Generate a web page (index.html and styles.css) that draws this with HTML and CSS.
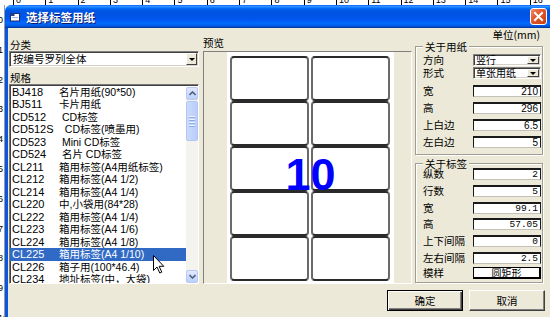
FILE: index.html
```html
<!DOCTYPE html>
<html>
<head>
<meta charset="utf-8">
<link rel="stylesheet" href="styles.css">
</head>
<body>
<div class="desk">
  <div class="ruler-top">
    <span>0</span><span>1</span><span>2</span><span>3</span><span>4</span><span>5</span><span>6</span><span>7</span><span>8</span><span>9</span><span>10</span><span>11</span><span>12</span><span>13</span><span>14</span><span>15</span><span>16</span><span>17</span>
  </div>
  <div class="ruler-left">
    <span>0</span><span>1</span><span>2</span><span>3</span><span>4</span><span>5</span><span>6</span><span>7</span><span>8</span><span>9</span><span>10</span>
  </div>
  <div class="win">
    <div class="titlebar">
      <svg class="ticon" width="11" height="10" viewBox="0 0 11 10">
        <rect x="0.5" y="1.5" width="9" height="7.5" fill="#fff" stroke="#1b2f6e"/>
        <rect x="0.5" y="1.5" width="4" height="2.5" fill="#2a3f8a"/>
        <rect x="2" y="5" width="6" height="1" fill="#9db3e6"/>
      </svg>
      <span class="ttext">选择标签用纸</span>
      <div class="close">
        <svg width="11" height="11" viewBox="0 0 11 11"><path d="M2 2 L9 9 M9 2 L2 9" stroke="#fff" stroke-width="2" stroke-linecap="square"/></svg>
      </div>
    </div>
    <div class="frame">
      <div class="main">
        <div class="col-left">
          <div class="lbl lbl-a">分类</div>
          <div class="combo combo-wide"><span class="val">按编号罗列全体</span><span class="arrow"></span></div>
          <div class="lbl lbl-b">规格</div>
          <div class="list">
            <div class="items">
              <div class="item"><span class="code">BJ418</span><span class="desc">名片用纸(90*50)</span></div>
              <div class="item"><span class="code">BJ511</span><span class="desc">卡片用纸</span></div>
              <div class="item"><span class="code">CD512</span><span class="desc"> CD标签</span></div>
              <div class="item"><span class="code">CD512S</span><span class="desc">  CD标签(喷墨用)</span></div>
              <div class="item"><span class="code">CD523</span><span class="desc"> Mini CD标签</span></div>
              <div class="item"><span class="code">CD524</span><span class="desc"> 名片 CD标签</span></div>
              <div class="item"><span class="code">CL211</span><span class="desc">箱用标签(A4用纸标签)</span></div>
              <div class="item"><span class="code">CL212</span><span class="desc">箱用标签(A4 1/2)</span></div>
              <div class="item"><span class="code">CL214</span><span class="desc">箱用标签(A4 1/4)</span></div>
              <div class="item"><span class="code">CL220</span><span class="desc">中,小袋用(84*28)</span></div>
              <div class="item"><span class="code">CL222</span><span class="desc">箱用标签(A4 1/4)</span></div>
              <div class="item"><span class="code">CL223</span><span class="desc">箱用标签(A4 1/6)</span></div>
              <div class="item"><span class="code">CL224</span><span class="desc">箱用标签(A4 1/8)</span></div>
              <div class="item sel"><span class="code">CL225</span><span class="desc">箱用标签(A4 1/10)</span></div>
              <div class="item"><span class="code">CL226</span><span class="desc">箱子用(100*46.4)</span></div>
              <div class="item"><span class="code">CL234</span><span class="desc">地址标签(中，大袋)</span></div>
            </div>
            <div class="vscroll">
              <div class="sb-btn"><svg width="7" height="5" viewBox="0 0 7 5"><path d="M0.5 4 L3.5 1 L6.5 4" fill="none" stroke="#4d6185" stroke-width="1.6"/></svg></div>
              <div class="sb-track"><div class="sb-thumb"><i></i><i></i><i></i><i></i></div></div>
              <div class="sb-btn"><svg width="7" height="5" viewBox="0 0 7 5"><path d="M0.5 1 L3.5 4 L6.5 1" fill="none" stroke="#4d6185" stroke-width="1.6"/></svg></div>
            </div>
          </div>
        </div>
        <div class="col-mid">
          <div class="lbl lbl-c">预览</div>
          <div class="preview">
            <div class="paper">
              <div class="labels">
                <div class="cell"></div><div class="cell"></div>
                <div class="cell"></div><div class="cell"></div>
                <div class="cell"></div><div class="cell"></div>
                <div class="cell"></div><div class="cell"></div>
                <div class="cell"></div><div class="cell"></div>
              </div>
              <div class="count">10</div>
            </div>
          </div>
        </div>
        <div class="col-right">
          <div class="unit">单位(mm)</div>
          <div class="group g1">
            <span class="gtitle">关于用纸</span>
            <div class="frow"><span class="flbl">方向</span><div class="combo combo-sm"><span class="val">竖行</span><span class="arrow"></span></div></div>
            <div class="frow m1"><span class="flbl">形式</span><div class="combo combo-sm"><span class="val">单张用纸</span><span class="arrow"></span></div></div>
            <div class="frow m6"><span class="flbl">宽</span><div class="field">210</div></div>
            <div class="frow m5"><span class="flbl">高</span><div class="field">296</div></div>
            <div class="frow m5"><span class="flbl">上白边</span><div class="field">6.5</div></div>
            <div class="frow m5"><span class="flbl">左白边</span><div class="field">5</div></div>
          </div>
          <div class="group g2">
            <span class="gtitle">关于标签</span>
            <div class="frow"><span class="flbl">纵数</span><div class="field mono">2</div></div>
            <div class="frow m5"><span class="flbl">行数</span><div class="field mono">5</div></div>
            <div class="frow m5"><span class="flbl">宽</span><div class="field mono">99.1</div></div>
            <div class="frow m4"><span class="flbl">高</span><div class="field mono">57.05</div></div>
            <div class="frow m5"><span class="flbl">上下间隔</span><div class="field mono">0</div></div>
            <div class="frow m5"><span class="flbl">左右间隔</span><div class="field mono">2.5</div></div>
            <div class="frow m3"><span class="flbl">模样</span><div class="shape">圆矩形</div></div>
          </div>
        </div>
      </div>
      <div class="btnrow">
        <div class="btn btn-default">确定</div>
        <div class="btn">取消</div>
      </div>
    </div>
  </div>
  <svg class="cursor" width="12" height="19" viewBox="0 0 12 19">
    <path d="M0.5 0.5 L0.5 15.5 L4 12 L6.8 18 L8.8 17.1 L6.1 11.3 L10.8 11.3 Z" fill="#fff" stroke="#000" stroke-width="1" stroke-linejoin="miter"/>
  </svg>
</div>
</body>
</html>
```
FILE: styles.css
```css
* { box-sizing: border-box; }
body {
  margin: 0;
  width: 550px;
  height: 317px;
  overflow: hidden;
  background: #fff;
  font-family: "Liberation Sans", "Noto Sans CJK SC", sans-serif;
  color: #000;
}
.desk {
  position: relative;
  display: grid;
  grid-template-columns: 5px 545px;
  grid-template-rows: 5px 312px;
  width: 550px;
  height: 317px;
  overflow: hidden;
}
.ruler-top {
  grid-column: 1 / 3;
  grid-row: 1;
  display: flex;
  padding-left: 13px;
  overflow: hidden;
}
.ruler-top span {
  flex: none;
  width: 32.3px;
  height: 5px;
  border-left: 1px solid #000;
  display: flex;
  align-items: flex-end;
  padding-left: 2px;
  font-size: 9px;
  line-height: 9px;
  overflow: hidden;
}
.ruler-left {
  grid-column: 1;
  grid-row: 2;
  display: flex;
  flex-direction: column;
  padding-top: 10px;
  overflow: hidden;
  border-right: 1px solid #9a9a9a;
}
.ruler-left span {
  flex: none;
  height: 29.8px;
  font-size: 9px;
  line-height: 10px;
  text-indent: -2px;
  white-space: nowrap;
  overflow: hidden;
}
.win {
  grid-column: 2;
  grid-row: 2;
  display: flex;
  flex-direction: column;
  overflow: hidden;
}
.titlebar {
  flex: none;
  height: 23px;
  display: flex;
  align-items: center;
  padding-left: 5px;
  border-radius: 6px 0 0 0;
  background: linear-gradient(to bottom, #0058ee 0%, #3593ff 5%, #288eff 8%, #127dff 11%, #036ffc 14%, #0262ee 18%, #0057e5 24%, #0054e3 30%, #0055eb 58%, #005bf5 68%, #026afe 78%, #0062ef 87%, #0052d6 93%, #0040ab 97%, #003092 100%);
}
.ticon { flex: none; }
.ttext {
  margin-left: 5px;
  color: #fff;
  font-family: "Noto Sans CJK SC", sans-serif;
  font-weight: bold;
  font-size: 11.5px;
  line-height: 14px;
  text-shadow: 1px 1px 0 #0a1e6e;
}
.close {
  margin-left: auto;
  margin-right: 3px;
  width: 17px;
  height: 17px;
  border: 1px solid #fff;
  border-radius: 3px;
  background: linear-gradient(135deg, #f08a62 0%, #e2572a 45%, #c9400f 100%);
  display: flex;
  align-items: center;
  justify-content: center;
}
.frame {
  flex: 1;
  border-left: 3px solid #0a55e4;
  background: #ece9d8;
}
.main {
  display: flex;
  height: 256px;
}
.col-left {
  margin-left: 1px;
  width: 190px;
  display: flex;
  flex-direction: column;
}
.col-mid {
  margin-left: 4px;
  width: 209px;
  display: flex;
  flex-direction: column;
}
.col-right {
  margin-left: 3px;
  width: 128px;
  display: flex;
  flex-direction: column;
}
.lbl {
  display: flex;
  align-items: flex-end;
  font-family: "Noto Sans CJK SC", sans-serif;
  font-size: 10.5px;
  line-height: 13px;
}
.lbl-a { height: 23px; padding-left: 1px; }
.lbl-b { height: 17px; padding-left: 1px; padding-bottom: 0; }
.lbl-c { height: 23px; padding-bottom: 2px; }

.combo {
  display: flex;
  background: #fff;
  border: 1px solid;
  border-color: #808080 #fff #fff #808080;
  box-shadow: inset 1px 1px 0 #404040, inset -1px -1px 0 #d4d0c8;
}
.combo .val {
  flex: 1;
  padding-left: 3px;
  font-family: "Noto Sans CJK SC", sans-serif;
  font-size: 10.5px;
  white-space: nowrap;
  overflow: hidden;
  display: flex;
  align-items: center;
}
.combo .arrow {
  flex: none;
  width: 11px;
  margin: 1px 1px 1px 0;
  background: #ece9d8;
  border: 1px solid;
  border-color: #fff #404040 #404040 #fff;
  display: flex;
  align-items: center;
  justify-content: center;
}
.combo .arrow::after {
  content: "";
  border-left: 3px solid transparent;
  border-right: 3px solid transparent;
  border-top: 3px solid #000;
}
.combo-wide { height: 16px; width: 190px; }
.combo-wide .val { line-height: 14px; }
.combo-sm { height: 12px; width: 68px; }
.combo-sm .val { padding-left: 2px; line-height: 10px; font-size: 10px; }
.combo-sm .arrow { width: 12px; }

.list {
  height: 200px;
  display: flex;
  background: #fff;
  border: 1px solid;
  border-color: #7a7a7a #fff #fff #7a7a7a;
  box-shadow: inset 1px 1px 0 #404040;
}
.items {
  flex: 1;
  padding-top: 0.5px;
  overflow: hidden;
}
.item {
  height: 12.5px;
  line-height: 12.5px;
  padding-left: 2px;
  font-size: 11px;
  white-space: pre;
  overflow: hidden;
}
.item .code { display: inline-block; width: 47px; }
.item .desc { font-size: 10.5px; }
.item.sel { background: #316ac5; color: #fff; }
.vscroll {
  flex: none;
  width: 12px;
  margin: 2px 0 0 0;
  display: flex;
  flex-direction: column;
  background: #f4f3ee;
}
.sb-btn {
  flex: none;
  height: 13px;
  border: 1px solid #b7caf5;
  border-radius: 2px;
  background: linear-gradient(#e0e9fe, #bdd0fb);
  display: flex;
  align-items: center;
  justify-content: center;
}
.sb-track {
  flex: 1;
  padding-top: 1px;
}
.sb-thumb {
  height: 40px;
  border: 1px solid #b2c6f4;
  border-radius: 2px;
  background: linear-gradient(90deg, #cbdafd, #b9cdfa);
  display: flex;
  flex-direction: column;
  align-items: center;
  justify-content: center;
  gap: 1px;
}
.sb-thumb i {
  display: block;
  width: 6px;
  height: 1px;
  background: #eef3ff;
  box-shadow: 0 1px 0 #8faaf0;
  margin-bottom: 1px;
}

.preview {
  height: 233px;
  width: 209px;
  border: 1px solid;
  border-color: #808080 #fff #fff #808080;
  padding-left: 23px;
}
.paper {
  position: relative;
  width: 167px;
  height: 231px;
  background: #fff;
  padding: 4px 0 0 3px;
}
.labels {
  display: grid;
  grid-template-columns: 79px 79px;
  grid-auto-rows: 45px;
  column-gap: 2px;
}
.cell {
  border: 2px solid #6a6a6a;
  border-top-color: #2a2a2a;
  border-bottom-color: #2a2a2a;
  border-radius: 4px;
}
.count {
  position: absolute;
  top: 100px;
  left: 0;
  right: 0;
  text-align: center;
  font-family: "Liberation Sans", sans-serif;
  font-weight: bold;
  font-size: 45px;
  line-height: 45px;
  color: #0000ff;
}

.unit {
  height: 18px;
  text-align: right;
  padding-right: 3px;
  font-family: "Noto Sans CJK SC", sans-serif;
  font-size: 10.5px;
  line-height: 13px;
}
.group {
  position: relative;
  border: 1px solid #a09e90;
  box-shadow: inset 1px 1px 0 #fff, 1px 1px 0 #fff;
  padding-left: 7px;
}
.g1 { height: 109px; padding-top: 7px; }
.g2 { height: 120px; margin-top: 8px; padding-top: 4px; }
.gtitle {
  position: absolute;
  top: -6px;
  left: 7px;
  padding: 0 2px;
  background: #ece9d8;
  font-family: "Noto Sans CJK SC", sans-serif;
  font-size: 10.5px;
  line-height: 11px;
}
.frow {
  display: flex;
  align-items: center;
  height: 12px;
}
.m1 { margin-top: 1px; }
.m3 { margin-top: 3px; }
.m4 { margin-top: 4px; }
.m5 { margin-top: 5px; }
.m6 { margin-top: 6px; }
.flbl {
  width: 50px;
  flex: none;
  font-family: "Noto Sans CJK SC", sans-serif;
  font-size: 10.5px;
  line-height: 12px;
  white-space: nowrap;
}
.field {
  width: 68px;
  height: 12px;
  background: #fff;
  border: 1px solid #1a1a1a;
  border-top-width: 2px;
  border-bottom-color: #c4c2b8;
  text-align: right;
  padding-right: 2px;
  font-size: 10px;
  line-height: 9px;
}
.field.mono {
  font-family: "Liberation Mono", monospace;
  font-size: 9.5px;
}
.shape {
  width: 68px;
  height: 12px;
  background: #fff;
  border: 1px solid #000;
  border-right-width: 2px;
  border-bottom-width: 2px;
  text-align: center;
  font-family: "Noto Sans CJK SC", sans-serif;
  font-size: 10px;
  line-height: 9px;
}

.btnrow {
  display: flex;
  gap: 6px;
  padding-left: 379px;
  margin-top: 6px;
}
.btn {
  width: 76px;
  height: 21px;
  background: #ece9d8;
  border: 1px solid;
  border-color: #fff #404040 #404040 #fff;
  box-shadow: inset -1px -1px 0 #808080;
  display: flex;
  align-items: center;
  justify-content: center;
  font-family: "Noto Sans CJK SC", sans-serif;
  font-size: 10.5px;
}
.btn-default {
  border: 1px solid #000;
  box-shadow: inset 1px 1px 0 #fff, inset -1px -1px 0 #404040, inset -2px -2px 0 #808080;
}
.cursor {
  position: absolute;
  left: 153px;
  top: 255px;
}
```
